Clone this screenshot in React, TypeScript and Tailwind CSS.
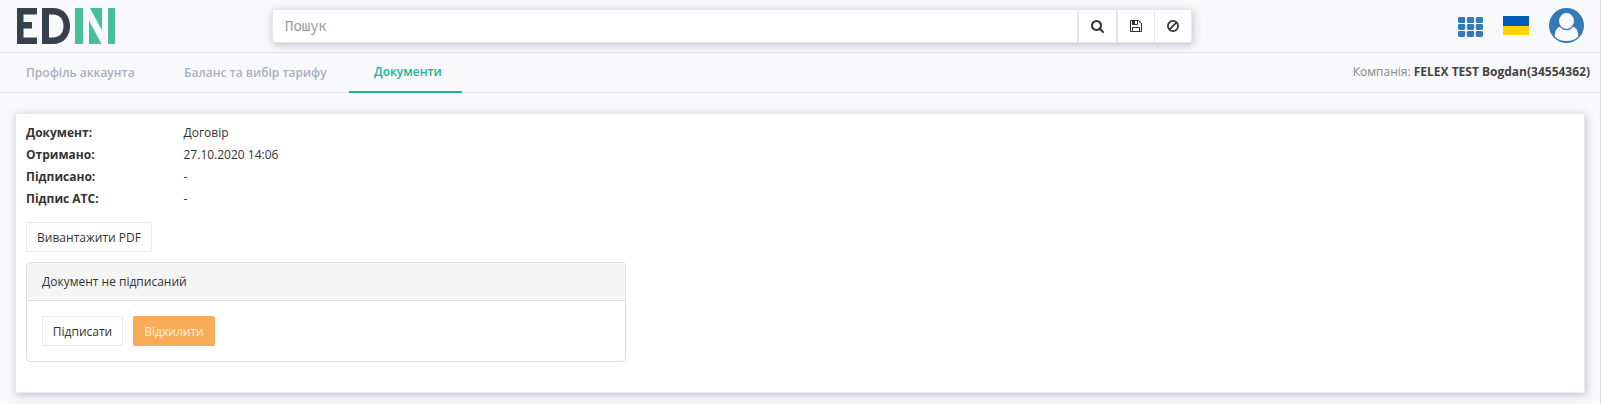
function Logo() {
  return (
    <svg className="ml-[17px] block" width="98" height="36" viewBox="0 0 98 36" aria-label="EDIN">
      <path d="M0 0H20V6.5H6.5V14H15V20.5H6.5V29.5H20V36H0Z" fill="#37404d" />
      <path fillRule="evenodd" d="M25 0H36C47 0 53 8 53 18S47 36 36 36H25ZM32 6.5V29.5H36C43 29.5 46.5 24.500 46.500 18S43 6.500 36 6.500Z" fill="#37404d" />
      <path d="M58 0H66V36H58ZM73 0H85V22.500ZM72 12.500V36H84.500ZM91 0H98V36H91Z" fill="#48bf96" />
    </svg>
  );
}

function SearchIcon() {
  return (
    <svg width="13" height="13" viewBox="0 0 1664 1664" fill="#333">
      <path d="M1152 704q0-185-131.500-316.500T704 256 387.500 387.500 256 704t131.500 316.500T704 1152t316.500-131.500T1152 704zm512 832q0 52-38 90t-90 38q-54 0-90-38l-343-342q-179 124-399 124-143 0-273.500-55.500t-225-150-150-225T0 704t55.500-273.500 150-225 225-150T704 0t273.500 55.500 225 150 150 225T1408 704q0 220-124 399l343 343q37 37 37 90z" />
    </svg>
  );
}

function SaveIcon() {
  return (
    <svg width="12" height="12" viewBox="0 0 1536 1536" fill="#333">
      <path d="M384 1408h768v-384H384v384zm896 0h128V512q0-14-10-38.500t-20-34.500l-281-281q-10-10-34-20t-39-10v416q0 40-28 68t-68 28H352q-40 0-68-28t-28-68V128H128v1280h128V992q0-40 28-68t68-28h832q40 0 68 28t28 68v416zM896 480V160q0-13-9.500-22.500T864 128H672q-13 0-22.500 9.500T640 160v320q0 13 9.500 22.500T672 512h192q13 0 22.500-9.500T896 480zm640 32v928q0 40-28 68t-68 28H96q-40 0-68-28t-28-68V96q0-40 28-68T96 0h928q40 0 88 20t76 48l280 280q28 28 48 76t20 88z" />
    </svg>
  );
}

function BanIcon() {
  return (
    <svg width="12" height="12" viewBox="0 0 12 12" fill="none" stroke="#333" strokeWidth="1.700">
      <circle cx="6" cy="6" r="5.100" />
      <path d="M2.400 9.600L9.600 2.400" />
    </svg>
  );
}

function GridIcon() {
  return (
    <svg width="25" height="20" viewBox="0 0 25 20" fill="#337ab7">
      {[0.1, 7, 13.9].map((y) =>
        [0, 8.9, 17.8].map((x) => <rect key={`${x}-${y}`} x={x} y={y} width="7.200" height="6" rx="1.400" />),
      )}
    </svg>
  );
}

function UserIcon() {
  return (
    <svg width="35" height="35" viewBox="0 0 35 35">
      <circle cx="17.500" cy="17.500" r="17.500" fill="#337ab7" />
      <path d="M11 18.800C7.500 19.500 6 23 5.700 28.200C8.500 31.500 12.500 33 17.500 33S26.500 31.500 29.300 28.200C29 23 27.500 19.500 24 18.800C22.300 21.300 20 22.200 17.500 22.200S12.700 21.300 11 18.800Z" fill="#f9f9fb" />
      <ellipse cx="17.500" cy="13" rx="7.500" ry="7.900" fill="#f9f9fb" />
    </svg>
  );
}

const rows = [
  ["Документ:", "Договір"],
  ["Отримано:", "27.10.2020 14:06"],
  ["Підписано:", "-"],
  ["Підпис АТС:", "-"],
];

export default function App() {
  return (
    <div className="h-[404px] w-[1601px] overflow-hidden border-r border-[#d9dadd] bg-[#f9f9fb] font-['Open_Sans','Noto_Sans',sans-serif] text-xs text-[#333]">
      <header className="flex h-[53px] border-b border-[#e4e6ea]">
        <div className="w-[272px] pt-2">
          <Logo />
        </div>
        <div className="mt-[9px] flex h-[34px] w-[920px] border border-[#e5e6e7] bg-white shadow-[1px_2px_8px_rgba(60,70,100,0.3)]">
          <input
            className="w-[804px] pl-3 font-['Noto_Sans_Mono','DejaVu_Sans_Mono',monospace] text-sm outline-none placeholder:text-[#999]"
            placeholder="Пошук"
          />
          <button className="flex w-[39px] items-center justify-center border-l-2 border-[#e5e6e7] pr-px"><SearchIcon /></button>
          <button className="flex w-[38px] items-center justify-center border-l-2 border-[#e5e6e7]"><SaveIcon /></button>
          <button className="flex w-[37px] items-center justify-center border-l border-[#e5e6e7]"><BanIcon /></button>
        </div>
        <div className="ml-auto flex pr-4">
          <div className="mt-[17px]"><GridIcon /></div>
          <div className="mt-4 ml-5 h-[19px] w-[26px]">
            <div className="h-[10px] bg-[#005bbb]" />
            <div className="h-[9px] bg-[#ffd500]" />
          </div>
          <div className="mt-2 ml-5"><UserIcon /></div>
        </div>
      </header>
      <nav className="flex h-10 border-b border-[#e4e6ea] font-semibold text-[#a7b1c2]">
        <a className="w-[158px] pt-3 pl-[26px]">Профіль аккаунта</a>
        <a className="w-[191px] pt-3 pl-[26px]">Баланс та вибір тарифу</a>
        <a className="h-10 w-[113px] border-b-2 border-[#1ab394] pt-[11px] pl-[25px] text-[#1ab394]">Документи</a>
        <div className="ml-auto pt-[11px] pr-2.5 font-normal text-[#888]">
          Компанія: <b className="font-bold text-[#444]">FELEX TEST Bogdan(34554362)</b>
        </div>
      </nav>
      <main className="mt-[20px] ml-[15px] h-[280px] w-[1570px] border border-[#e7eaec] bg-white px-2.5 pt-2 shadow-[1px_2px_8px_rgba(60,70,100,0.3)]">
        {rows.map(([label, value]) => (
          <div key={label} className="flex h-[22px] items-center">
            <b className="w-[157.5px]">{label}</b>
            <span>{value}</span>
          </div>
        ))}
        <button className="mt-3 flex h-[30px] w-[126px] items-center justify-center rounded-[2px] border border-[#e7eaec] pt-0.5">Вивантажити PDF</button>
        <section className="mt-2.5 h-[100px] w-[600px] overflow-hidden rounded border border-[#ddd]">
          <div className="flex h-[38px] items-center border-b border-[#ddd] bg-[#f5f5f5] pl-[15px]">Документ не підписаний</div>
          <div className="flex gap-2.5 pt-[15px] pl-[15px]">
            <button className="h-[30px] w-[81px] rounded-[2px] border border-[#e7eaec] pt-0.5">Підписати</button>
            <button className="h-[30px] w-[82px] rounded-[2px] bg-[#f8ac59] pt-0.5 text-white/80">Відхилити</button>
          </div>
        </section>
      </main>
    </div>
  );
}
